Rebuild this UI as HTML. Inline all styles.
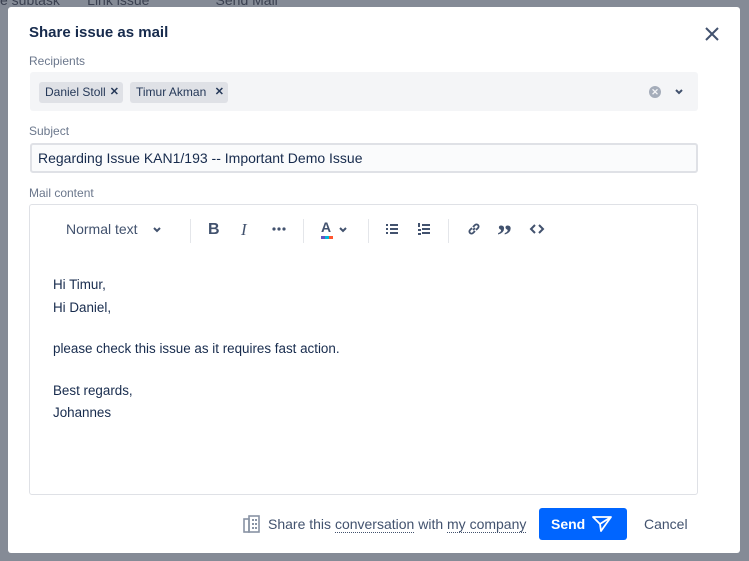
<!DOCTYPE html>
<html><head><style>
body{margin:0;width:749px;height:561px;background:#858b96;font-family:"Liberation Sans",sans-serif;position:relative;overflow:hidden;color:#172b4d}
.bgtxt{position:absolute;color:#3a4050;font-size:14px}
.modal{position:absolute;left:8px;top:7px;width:732px;height:546px;background:#fff;border-radius:3px}
.a{position:absolute}
.lbl{font-size:12px;color:#6b778c}
.chip{position:absolute;top:10px;height:21px;background:#dfe1e6;border-radius:3px;font-size:12px;line-height:21px;padding-left:6px;color:#253858}
.sep{position:absolute;top:14px;width:1px;height:24px;background:#e4e6ea}
.body p{margin:0;font-size:13.4px;color:#172b4d;position:absolute;left:23px}
</style></head><body>
<div class="bgtxt" style="left:0;top:-8px">e subtask &nbsp;&nbsp;&nbsp;&nbsp;&nbsp; Link issue &nbsp;&nbsp;&nbsp;&nbsp;&nbsp;&nbsp;&nbsp;&nbsp;&nbsp;&nbsp;&nbsp;&nbsp;&nbsp;&nbsp;&nbsp; Send Mail</div>
<div class="modal">
<div class="a" style="left:21px;top:17px;font-size:15px;font-weight:bold">Share issue as mail</div>
<svg class="a" style="left:696px;top:19px" width="16" height="16"><path d="M2 2L14 14M14 2L2 14" stroke="#42526e" stroke-width="2"/></svg>
<div class="a lbl" style="left:21px;top:47px">Recipients</div>
<div class="a" style="left:22px;top:65px;width:668px;height:39px;background:#f4f5f7;border-radius:3px">
 <div class="chip" style="left:9px;width:78px">Daniel Stoll <b style="position:absolute;right:4px;font-size:11px">✕</b></div>
 <div class="chip" style="left:100px;width:92px">Timur Akman <b style="position:absolute;right:4px;font-size:11px">✕</b></div>
 <div class="a" style="left:619px;top:14px;width:12px;height:12px;border-radius:50%;background:#a5adba;color:#f4f5f7;font-size:9px;line-height:12px;text-align:center;font-weight:bold">✕</div>
 <svg class="a" style="left:644px;top:16px" width="10" height="8"><path d="M2 2L5 5L8 2" stroke="#42526e" stroke-width="2" fill="none"/></svg>
</div>
<div class="a lbl" style="left:21px;top:117px">Subject</div>
<div class="a" style="left:22px;top:136px;width:668px;height:30px;box-sizing:border-box;border:2px solid #dfe1e6;background:#fafbfc;border-radius:3px;font-size:14px;line-height:26px;padding-left:6px">Regarding Issue KAN1/193 -- Important Demo Issue</div>
<div class="a lbl" style="left:21px;top:179px">Mail content</div>
<div class="a body" style="left:21px;top:197px;width:667px;height:289px;border:1px solid #dfe1e6;border-radius:3px">
 <div class="a" style="left:36px;top:16px;font-size:14px;color:#42526e">Normal text</div>
 <svg class="a" style="left:122px;top:21px" width="10" height="8"><path d="M2 2L5 5L8 2" stroke="#42526e" stroke-width="2" fill="none"/></svg>
 <div class="sep" style="left:160px"></div>
 <div class="a" style="left:178px;top:16px;font-size:16px;font-weight:bold;color:#42526e">B</div>
 <div class="a" style="left:211px;top:15px;font-size:17px;font-style:italic;color:#42526e;font-family:'Liberation Serif',serif">I</div>
 <svg class="a" style="left:242px;top:22px" width="14" height="4"><g fill="#42526e"><circle cx="2" cy="2" r="1.6"/><circle cx="7" cy="2" r="1.6"/><circle cx="12" cy="2" r="1.6"/></g></svg>
 <div class="sep" style="left:273px"></div>
 <div class="a" style="left:291px;top:14px;font-size:14px;font-weight:bold;color:#42526e">A</div>
 <div class="a" style="left:291px;top:31px;width:12px;height:3px;background:linear-gradient(90deg,#6554c0 33%,#00b8d9 33% 66%,#ff5630 66%)"></div>
 <svg class="a" style="left:308px;top:21px" width="10" height="8"><path d="M2 2L5 5L8 2" stroke="#42526e" stroke-width="2" fill="none"/></svg>
 <div class="sep" style="left:338px"></div>
 <svg class="a" style="left:355px;top:17px" width="14" height="14"><g fill="#42526e"><rect x="1" y="2" width="2" height="2"/><rect x="1" y="6" width="2" height="2"/><rect x="1" y="10" width="2" height="2"/><rect x="5" y="2" width="8" height="2"/><rect x="5" y="6" width="8" height="2"/><rect x="5" y="10" width="8" height="2"/></g></svg>
 <svg class="a" style="left:387px;top:17px" width="14" height="14"><g fill="#42526e"><rect x="1" y="1" width="2" height="4"/><rect x="1" y="7" width="3" height="2"/><rect x="1" y="11" width="3" height="2"/><rect x="5" y="2" width="8" height="2"/><rect x="5" y="6" width="8" height="2"/><rect x="5" y="10" width="8" height="2"/></g></svg>
 <div class="sep" style="left:418px"></div>
 <svg class="a" style="left:436px;top:16px" width="16" height="16"><path d="M7 9L9 7M6 7L4 9a2 2 0 0 0 3 3l2-2M10 9l2-2a2 2 0 0 0-3-3L7 6" stroke="#42526e" stroke-width="1.8" fill="none"/></svg>
 <div class="a" style="left:467px;top:16px;font-size:30px;line-height:30px;height:16px;overflow:hidden;font-weight:bold;color:#42526e;font-family:'Liberation Serif',serif">”</div>
 <svg class="a" style="left:499px;top:17px" width="16" height="14"><path d="M6 3L2 7L6 11M10 3L14 7L10 11" stroke="#42526e" stroke-width="2" fill="none"/></svg>
 <p style="top:72px">Hi Timur,</p>
 <p style="top:95px">Hi Daniel,</p>
 <p style="top:136px">please check this issue as it requires fast action.</p>
 <p style="top:178px">Best regards,</p>
 <p style="top:200px">Johannes</p>
</div>
<svg class="a" style="left:235px;top:508px" width="18" height="18"><g fill="none" stroke="#8993a4" stroke-width="1.6"><rect x="1" y="4" width="5" height="13"/><rect x="6" y="1" width="10" height="16"/></g><g fill="#8993a4"><rect x="9" y="4" width="2" height="2"/><rect x="12" y="4" width="2" height="2"/><rect x="9" y="8" width="2" height="2"/><rect x="12" y="8" width="2" height="2"/><rect x="9" y="12" width="2" height="2"/><rect x="12" y="12" width="2" height="2"/></g></svg>
<div class="a" style="left:260px;top:509px;font-size:14px;color:#42526e">Share this <span style="border-bottom:1px dotted #42526e">conversation</span> with <span style="border-bottom:1px dotted #42526e">my company</span></div>
<div class="a" style="left:531px;top:501px;width:88px;height:32px;background:#0065ff;border-radius:3px;color:#fff;font-size:14px;font-weight:bold;line-height:32px"><span style="margin-left:12px">Send</span>
<svg class="a" style="left:52px;top:7px" width="22" height="18"><path d="M2 2H20L10 16L9 9Z M9 9L20 2" stroke="#fff" stroke-width="1.8" fill="none" stroke-linejoin="round"/></svg></div>
<div class="a" style="left:636px;top:509px;font-size:14px;color:#42526e">Cancel</div>
</div>
</body></html>
